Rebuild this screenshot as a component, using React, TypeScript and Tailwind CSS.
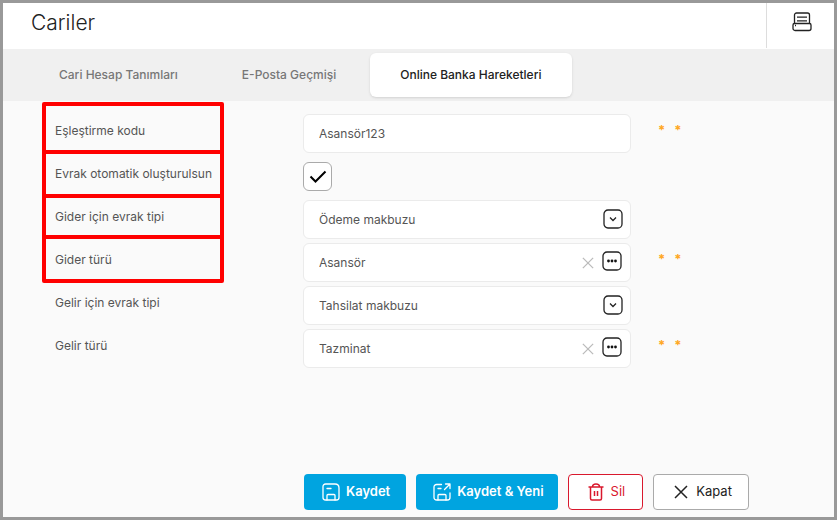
import { useState } from 'react'
import type { ReactNode } from 'react'

const tabs = ['Cari Hesap Tanımları', 'E-Posta Geçmişi', 'Online Banka Hareketleri']

function PrinterIcon() {
  return (
    <svg width="20" height="20" viewBox="0 0 20 20" fill="none" stroke="#222" strokeWidth="1.3">
      <path d="M2.500 11V3a2 2 0 0 1 2-2h11a2 2 0 0 1 2 2v8" />
      <path d="M2.500 11.500h15q1.500 0 1.500 1.500v3.500a2 2 0 0 1-2 2H3a2 2 0 0 1-2-2V13q0-1.500 1.500-1.500z" />
      <path d="M5 5.200h10M5 8.800h10" />
      <path d="M3 13.500h1" />
    </svg>
  )
}

function SaveIcon({ arrow = false }: { arrow?: boolean }) {
  return (
    <svg width="18" height="18" viewBox="0 0 18 18" fill="none" stroke="currentColor" strokeWidth="1.3" strokeLinecap="round" strokeLinejoin="round">
      {arrow ? (
        <>
          <path d="M8.500 1.500H3.500a2.500 2.500 0 0 0-2.500 2.500v10.500a2.500 2.500 0 0 0 2.500 2.500h11a2.500 2.500 0 0 0 2.500-2.500V10" />
          <path d="M11.500 6.500L17 1M12.500 1H17v4.500M5 5.500h3" />
        </>
      ) : (
        <>
          <path d="M3.500 1h9.500q4 0 4 4v9.500a2.500 2.500 0 0 1-2.500 2.500h-11A2.500 2.500 0 0 1 1 14.500v-11A2.500 2.500 0 0 1 3.500 1z" />
          <path d="M5 5.500h4" />
        </>
      )}
      <path d="M5 17v-4.500a1 1 0 0 1 1-1h6a1 1 0 0 1 1 1V17" />
    </svg>
  )
}

function TrashIcon() {
  return (
    <svg width="16" height="18" viewBox="0 0 16 18" fill="none" stroke="currentColor" strokeWidth="1.5">
      <path d="M0.500 4h15M2.500 4v11.500a1.500 1.500 0 0 0 1.500 1.500h8a1.500 1.500 0 0 0 1.500-1.500V4M4.500 4c0-4 7-4 7 0" />
      <path d="M6.500 8v5M9.500 8v5" />
    </svg>
  )
}

function CrossIcon({ size }: { size: number }) {
  return (
    <svg width={size} height={size} viewBox="0 0 14 14" fill="none" stroke="currentColor" strokeWidth="1.5">
      <path d="M1 1l12 12M13 1L1 13" />
    </svg>
  )
}

function ChevronBox() {
  return (
    <svg width="20" height="20" viewBox="0 0 20 20" fill="none" stroke="#222" strokeWidth="1.3">
      <rect x="1" y="1" width="18" height="18" rx="4" />
      <path d="M7 8.500l3 3 3-3" />
    </svg>
  )
}

function DotsBox() {
  return (
    <svg width="20" height="20" viewBox="0 0 20 20" fill="none" stroke="#222" strokeWidth="1.3">
      <rect x="1" y="1" width="18" height="18" rx="4" />
      <g fill="#111" stroke="none">
        <circle cx="6.500" cy="10" r="1.400" />
        <circle cx="10" cy="10" r="1.400" />
        <circle cx="13.500" cy="10" r="1.400" />
      </g>
    </svg>
  )
}

const fieldClass = 'h-[39px] w-full rounded-md border border-[#ebebeb] bg-white px-[15px] text-xs text-[#555] outline-none'

function Row({ id, label, required, children }: { id: string; label: string; required?: boolean; children: ReactNode }) {
  return (
    <div className="flex h-[39px] items-center">
      <label htmlFor={id} className="w-[248px] shrink-0 pb-1.5 text-xs text-[#555]">{label}</label>
      <div className="relative w-[328px] shrink">{children}</div>
      {required && (
        <div className="flex gap-[9px] self-start pt-1 pl-[27px] text-[13px] leading-6 font-bold text-[#ffa722]">
          <span>*</span>
          <span>*</span>
        </div>
      )}
    </div>
  )
}

function SelectField({ id, value }: { id: string; value: string }) {
  return (
    <>
      <select id={id} defaultValue={value} className={`${fieldClass} appearance-none`}>
        <option>{value}</option>
      </select>
      <span className="pointer-events-none absolute top-[9px] right-2"><ChevronBox /></span>
    </>
  )
}

function LookupField({ id, initial }: { id: string; initial: string }) {
  const [value, setValue] = useState(initial)
  return (
    <>
      <input id={id} value={value} onChange={(e) => setValue(e.target.value)} className={fieldClass} />
      <div className="absolute top-2 right-[9px] flex items-center gap-2">
        <button type="button" aria-label="Temizle" onClick={() => setValue('')} className="pt-1 text-[#bbb]"><CrossIcon size={12} /></button>
        <button type="button" aria-label="Seç"><DotsBox /></button>
      </div>
    </>
  )
}

export default function App() {
  const [active, setActive] = useState(2)
  return (
    <div className="flex min-h-screen flex-col border-3 border-[#999] bg-[#fafafa] font-[Inter,sans-serif]">
      <header className="flex h-[46px] bg-white">
        <h1 className="flex-1 pt-1 pl-7 text-[21px] leading-8 font-light text-[#222]">Cariler</h1>
        <div className="mb-px flex w-[68px] border-l border-[#ddd] pt-[9px] pl-[25px]">
          <button type="button" aria-label="Yazdır" className="self-start"><PrinterIcon /></button>
        </div>
      </header>

      <nav className="flex h-[52px] gap-1 bg-[#f0f0f0] px-[26px] py-1 text-xs font-medium">
        {tabs.map((tab, i) => (
          <button
            key={tab}
            type="button"
            onClick={() => setActive(i)}
            className={`rounded-md px-[30px] ${i === active ? 'bg-white text-[#222] shadow-sm' : 'text-[#777]'}`}
          >
            {tab}
          </button>
        ))}
      </nav>

      <main className="relative flex flex-col gap-1 pt-[13px] pl-[52px]">
        <Row id="kod" label="Eşleştirme kodu" required>
          <input id="kod" defaultValue="Asansör123" className={fieldClass} />
        </Row>
        <Row id="otomatik" label="Evrak otomatik oluşturulsun">
          <div className="relative size-[29px]">
            <input id="otomatik" type="checkbox" defaultChecked className="peer block size-[29px] appearance-none rounded-md border border-[#aaa] bg-white" />
            <svg className="pointer-events-none absolute inset-0 hidden peer-checked:block" width="29" height="29" viewBox="0 0 29 29" fill="none" stroke="#000" strokeWidth="2">
              <path d="M7.500 14.500l5 5L22.500 9.500" />
            </svg>
          </div>
        </Row>
        <Row id="gider-tipi" label="Gider için evrak tipi">
          <SelectField id="gider-tipi" value="Ödeme makbuzu" />
        </Row>
        <Row id="gider-turu" label="Gider türü" required>
          <LookupField id="gider-turu" initial="Asansör" />
        </Row>
        <Row id="gelir-tipi" label="Gelir için evrak tipi">
          <SelectField id="gelir-tipi" value="Tahsilat makbuzu" />
        </Row>
        <Row id="gelir-turu" label="Gelir türü" required>
          <LookupField id="gelir-turu" initial="Tazminat" />
        </Row>

        {/* red highlight frames around the first four labels */}
        <div className="pointer-events-none absolute top-px left-[39px] flex w-[182px] flex-col">
          <div className="h-[52px] rounded-xs border-4 border-[#f00]" />
          <div className="-mt-1 h-12 rounded-xs border-4 border-[#f00]" />
          <div className="-mt-1 h-[45px] rounded-xs border-4 border-[#f00]" />
          <div className="-mt-1 h-12 rounded-xs border-4 border-[#f00]" />
        </div>
      </main>

      <footer className="mt-auto flex gap-2.5 pb-[7px] pl-[301px] text-[13px]">
        <button type="button" className="flex h-9 items-center gap-1.5 rounded bg-[#00a4e0] pr-4 pl-[18px] font-semibold text-white">
          <SaveIcon />
          Kaydet
        </button>
        <button type="button" className="flex h-9 items-center gap-1.5 rounded bg-[#00a4e0] pr-[14px] pl-[17px] font-semibold text-white">
          <SaveIcon arrow />
          Kaydet &amp; Yeni
        </button>
        <button type="button" className="flex h-9 items-center gap-[7px] rounded border border-[#d9182d] bg-white pr-[17px] pl-[19px] text-[#d9182d]">
          <TrashIcon />
          Sil
        </button>
        <button type="button" className="flex h-9 items-center gap-2 rounded border border-[#aaa] bg-white pr-4 pl-5 text-[#222]">
          <CrossIcon size={14} />
          Kapat
        </button>
      </footer>
    </div>
  )
}
